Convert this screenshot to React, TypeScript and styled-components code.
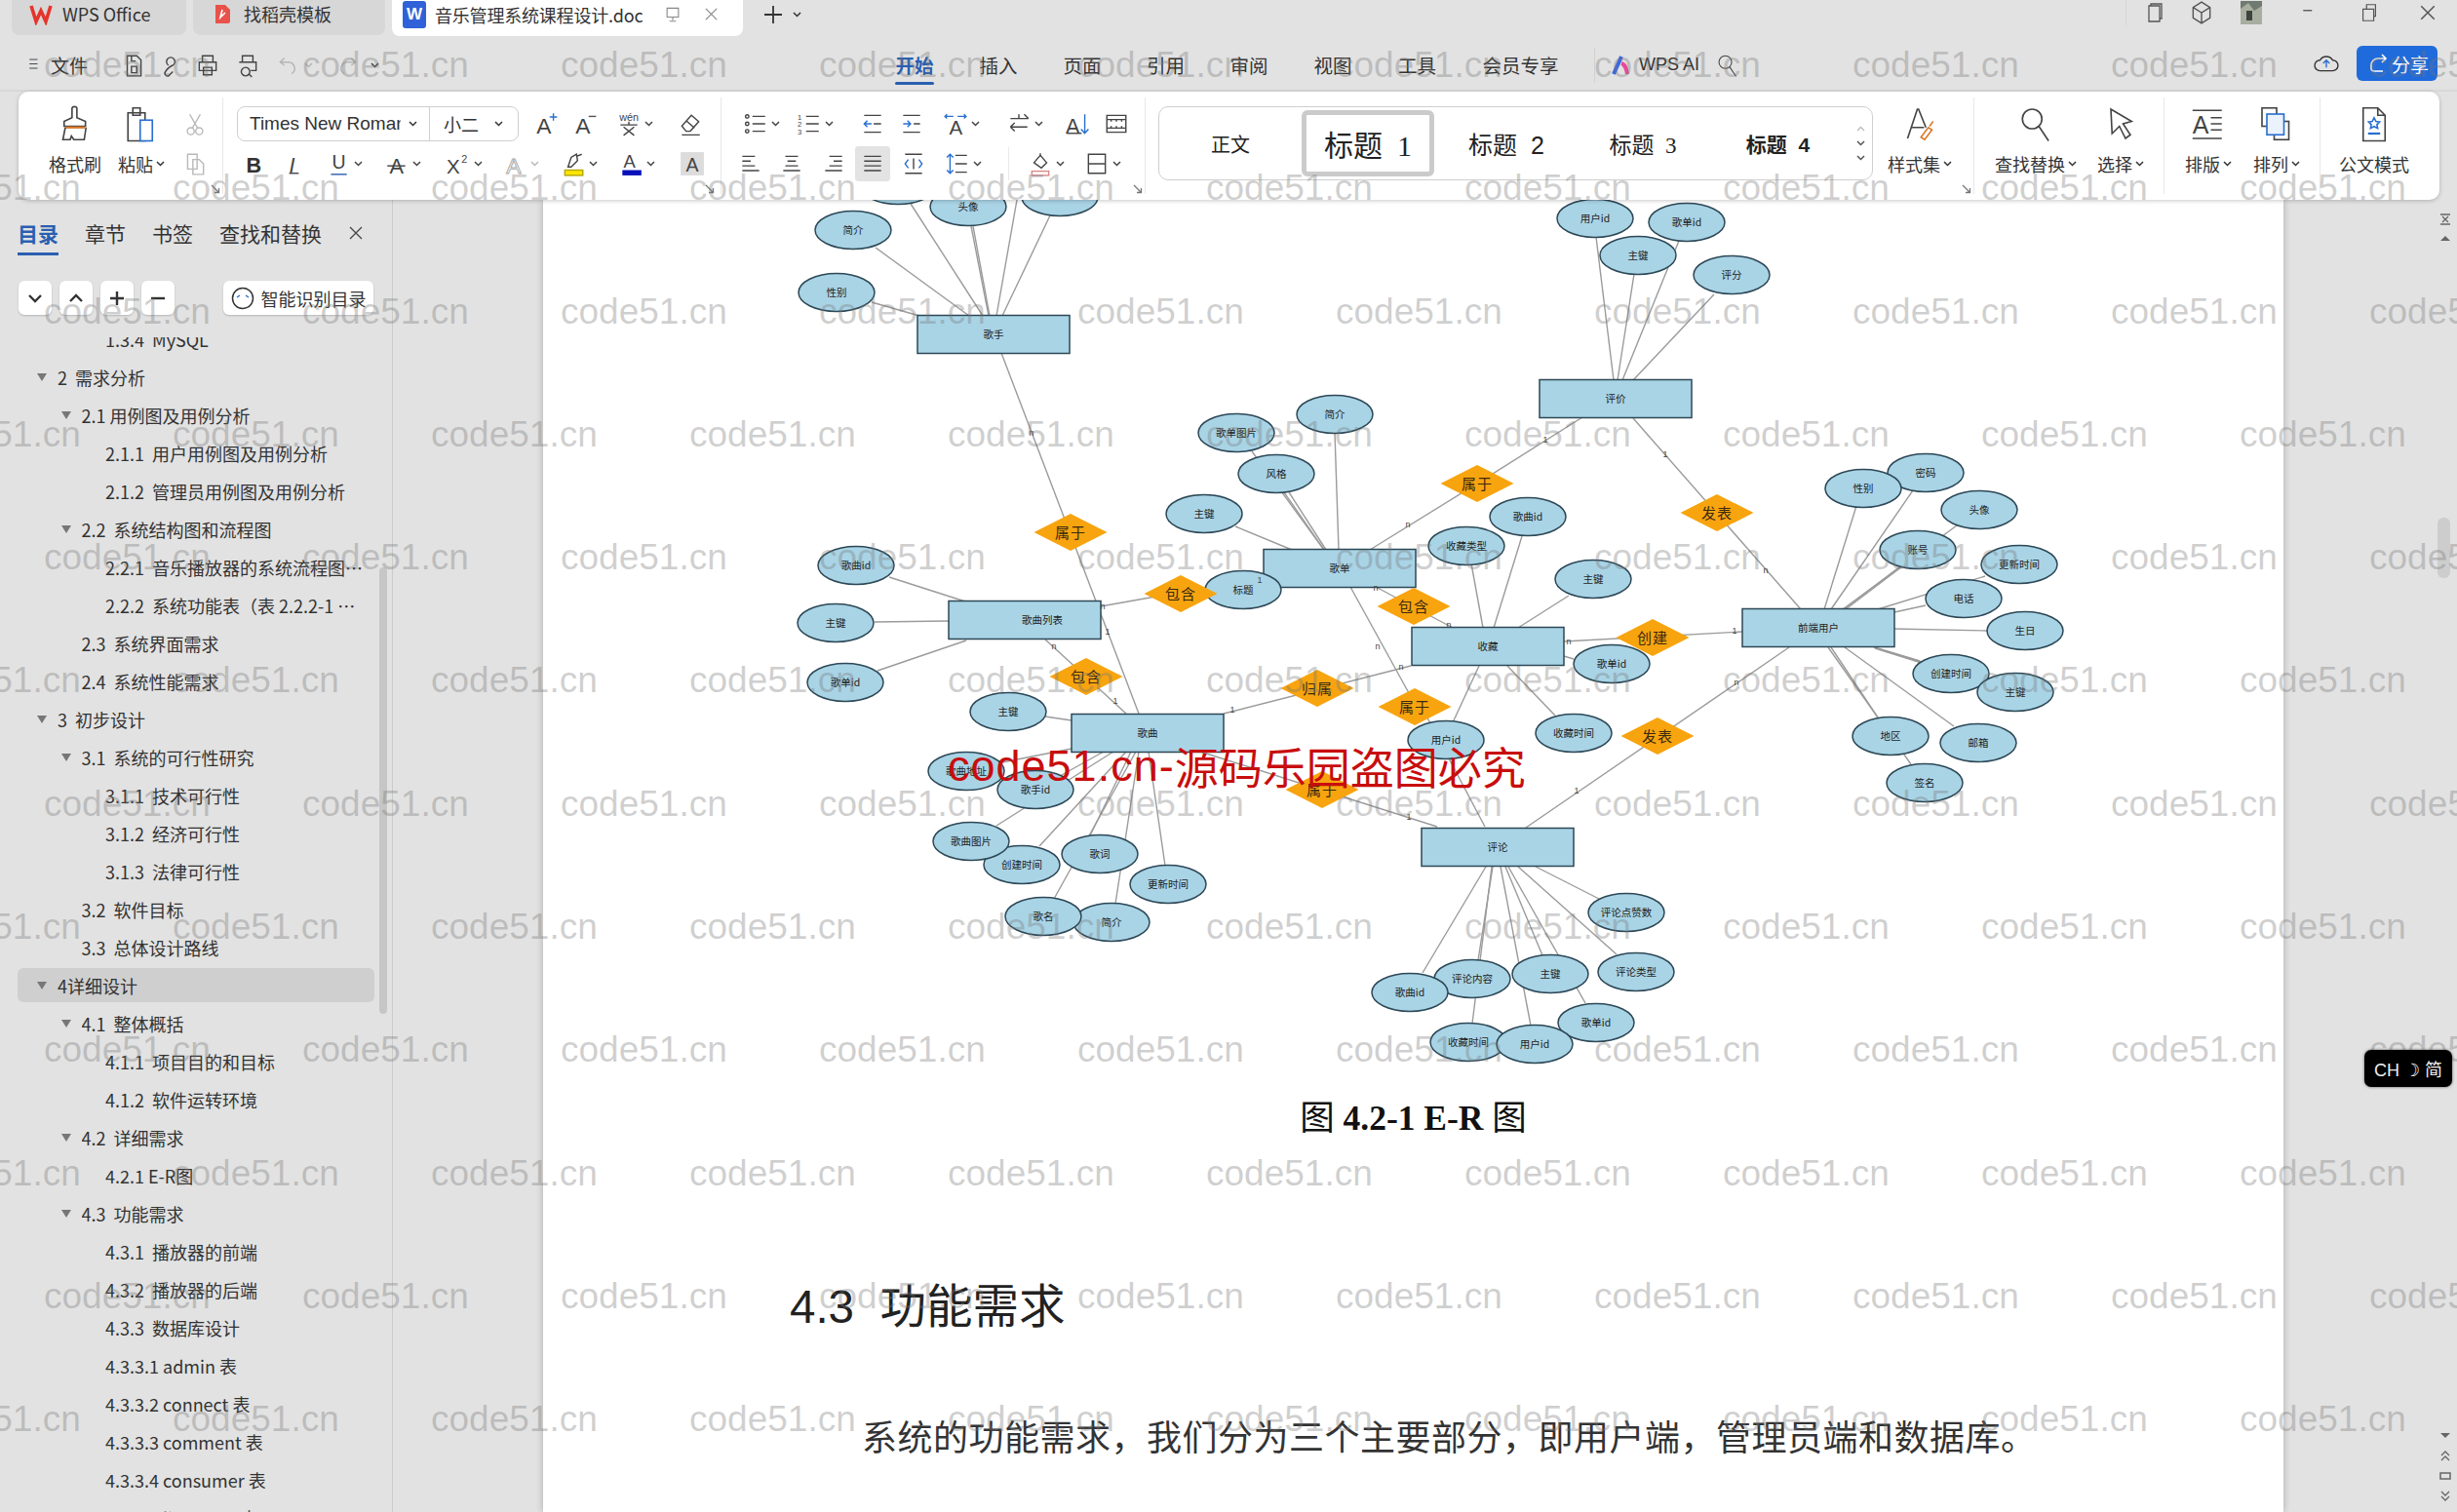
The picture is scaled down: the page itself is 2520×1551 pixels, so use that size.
import React from 'react';
import styled, { createGlobalStyle } from 'styled-components';

const CJK = `"Noto Sans CJK SC", sans-serif`;
const LATIN = `"Liberation Sans", "Noto Sans CJK SC", sans-serif`;

const Global = createGlobalStyle`
  html, body { margin: 0; padding: 0; background: #e2e2e2; }
  #root { width: 2520px; height: 1551px; overflow: hidden; }
  * { box-sizing: border-box; }
`;

const Root = styled.div`
  position: relative; width: 2520px; height: 1551px; overflow: hidden;
  display: flex; flex-direction: column; background: #e2e2e2;
  font-family: ${CJK}; color: #333;
`;

/* ---------- title bar ---------- */
const TabBar = styled.div`height: 37px; display: flex; padding-left: 12px; gap: 7px; align-items: flex-start;`;
const DocTab = styled.div<{ $w: number; $active?: boolean }>`
  width: ${p => p.$w}px; height: ${p => (p.$active ? 37 : 36)}px;
  background: ${p => (p.$active ? '#fff' : '#d7d7d7')};
  border-radius: 0 0 8px 8px; display: flex; align-items: center;
  padding: 0 0 8px ${p => (p.$active ? 11 : 18)}px; font-size: 18px; color: #333;
`;
const TabText = styled.span`margin-left: 10px; white-space: nowrap;`;
const DocName = styled.span`margin-left: 9px; white-space: nowrap; font-size: 18px; width: 218px; letter-spacing: -.2px;`;
const WordBadge = styled.span`
  width: 24px; height: 28px; background: #2f62d8; border-radius: 3px; color: #fff;
  font: 700 17px "Liberation Sans", sans-serif; display: flex; align-items: center; justify-content: center;
`;
const TabClose = styled.span<{ $ml: number }>`margin-left: ${p => p.$ml}px; display: flex; color: #888;`;
const NewTab = styled.div`margin-left: 14px; height: 29px; display: flex; align-items: center; gap: 10px; color: #333;`;
const WinControls = styled.div`margin-left: auto; height: 26px; display: flex; align-items: center; color: #555;`;
const WinCell = styled.span<{ $w: number; $line?: boolean }>`
  width: ${p => p.$w}px; height: 26px; display: flex; justify-content: center; align-items: center;
  ${p => (p.$line ? 'border-left: 1px solid #d6d6d6;' : '')}
`;

/* ---------- menu bar ---------- */
const MenuBar = styled.div`height: 57px; display: flex; align-items: flex-start; border-bottom: 2px solid #d8d8d8;`;
const QuickArea = styled.div`width: 895px; height: 50px; padding: 9px 0 0 28px; display: flex; align-items: center; color: #444;`;
const FileLabel = styled.span`font-size: 19px; margin: 0 34px 0 6px; white-space: nowrap; color: #333;`;
const QuickCell = styled.span<{ $w: number; $dim?: boolean }>`
  width: ${p => p.$w}px; display: flex; align-items: center; gap: 3px;
  color: ${p => (p.$dim ? '#b5b5b5' : '#444')};
`;
const MenuTabs = styled.div`display: flex;`;
const MenuTab = styled.div<{ $w: number; $active?: boolean }>`
  width: ${p => p.$w}px; height: 50px; padding-top: 9px; display: flex; align-items: center; justify-content: center;
  font-size: 19.5px; position: relative; white-space: nowrap;
  color: ${p => (p.$active ? '#2a5fb0' : '#333')};
  font-weight: ${p => (p.$active ? 700 : 400)};
`;
const ActiveBar = styled.span`position: absolute; left: 23px; width: 40px; bottom: 0; height: 3px; background: #2a5fb0; border-radius: 2px;`;
const MenuDivider = styled.span`width: 1px; height: 36px; background: #d0d0d0; margin: 12px 15px 0 13px;`;
const AiBlock = styled.div`height: 50px; padding-top: 9px; display: flex; align-items: center; font: 18px "Liberation Sans", sans-serif; color: #333; gap: 6px;`;
const SearchWrap = styled.span`margin-left: 10px; display: flex; color: #444;`;
const MenuRight = styled.div`margin-left: auto; padding: 6px 20px 0 0; height: 50px; display: flex; align-items: center; gap: 18px;`;
const ShareBtn = styled.div`
  width: 83px; height: 36px; background: #1f6bdc; color: #fff; border-radius: 6px;
  display: flex; align-items: center; justify-content: center; gap: 3px; font-size: 19px;
`;

/* ---------- ribbon ---------- */
const Ribbon = styled.div`
  height: 111px; margin: 0 18px 0 19px; background: #fff; border-radius: 10px; display: flex;
  box-shadow: 0 1px 4px rgba(0,0,0,.22); position: relative; z-index: 2; color: #444;
`;
const Group = styled.div<{ $w: number; $none?: boolean }>`
  width: ${p => p.$w}px; flex: none; margin: 6px 0; padding-top: 6px; position: relative;
  border-right: ${p => (p.$none ? 'none' : '1px solid #e8e8e8')};
`;
const Cols = styled.div<{ $pl?: number }>`display: flex; padding-left: ${p => p.$pl ?? 0}px;`;
const Launcher = styled.span<{ $r?: number }>`position: absolute; right: ${p => p.$r ?? 2}px; bottom: 0; display: flex; color: #777;`;
const Big = styled.div<{ $w: number }>`width: ${p => p.$w}px; flex: none; display: flex; flex-direction: column; align-items: center;`;
const BigIcon = styled.div`height: 41px; display: flex; align-items: center; justify-content: center;`;
const BigLabel = styled.div`height: 41px; display: flex; align-items: center; gap: 3px; font-size: 18px; color: #333; white-space: nowrap;`;
const Row = styled.div<{ $pl?: number }>`height: 41px; display: flex; align-items: center; padding-left: ${p => p.$pl ?? 0}px;`;
const Cell = styled.div<{ $w: number; $dim?: boolean }>`
  width: ${p => p.$w}px; flex: none; display: flex; align-items: center; gap: 3px;
  color: ${p => (p.$dim ? '#b9b9b9' : '#444')};
`;
const Hl = styled.span`display: flex; background: #e3e3e3; box-shadow: 0 0 0 5px #e3e3e3; border-radius: 1px;`;
const Sep = styled.span`width: 1px; height: 34px; background: #e8e8e8; margin-right: 19px; flex: none;`;
const FontSelect = styled.div`
  width: 289px; height: 36px; border: 1px solid #cfcfcf; border-radius: 8px; display: flex; align-items: center;
  margin-right: 15px; flex: none; font-size: 19px; color: #333;
`;
const FontName = styled.div`
  width: 197px; height: 100%; border-right: 1px solid #cfcfcf; padding-left: 12px; display: flex; align-items: center;
  gap: 8px; font-family: "Liberation Sans", sans-serif; font-size: 19px;
`;
const FontClip = styled.span`width: 155px; overflow: hidden; white-space: nowrap; flex: none;`;
const FontSize = styled.div`flex: 1; padding-left: 14px; display: flex; align-items: center; gap: 16px; font-size: 18px;`;
const StyleBox = styled.div`
  margin: 15px 0 0 13px; width: 733px; height: 76px; border: 1px solid #cfcfcf; border-radius: 10px;
  display: flex; align-items: center; flex: none;
`;
const StyleItem = styled.div<{ $w: number; $size: number; $sel?: boolean; $bold?: boolean; $serif?: boolean }>`
  width: ${p => p.$w}px; height: ${p => (p.$sel ? 68 : 60)}px; flex: none; display: flex; align-items: center; justify-content: center;
  white-space: pre; color: #222; font-size: ${p => p.$size}px; font-weight: ${p => (p.$bold ? 700 : 400)};
  font-family: ${p => (p.$serif ? `"Liberation Serif", "Noto Sans CJK SC", serif` : LATIN)};
  ${p => (p.$sel ? 'border: 5px solid #cbcbcb; border-radius: 6px;' : '')}
`;
const StyleArrows = styled.div`flex: 1; display: flex; flex-direction: column; align-items: center; gap: 9px; color: #555;`;

/* ---------- body ---------- */
const Body = styled.div`flex: 1; min-height: 0; display: flex;`;
const Sidebar = styled.aside`
  width: 403px; flex: none; border-right: 1px solid #cbcbcb; display: flex; flex-direction: column; position: relative;
`;
const SideTabs = styled.div`display: flex; gap: 27px; padding: 18px 0 0 18px; align-items: flex-start;`;
const SideTab = styled.div<{ $active?: boolean }>`
  height: 39px; line-height: 32px; font-size: 21px; white-space: nowrap; color: ${p => (p.$active ? '#2a5fb0' : '#333')};
  font-weight: ${p => (p.$active ? 700 : 400)};
  border-bottom: ${p => (p.$active ? '3px solid #2a5fb0' : 'none')};
`;
const SideClose = styled.span`height: 32px; display: flex; align-items: center; color: #444;`;
const TreeTools = styled.div`display: flex; gap: 8px; padding: 26px 0 0 19px;`;
const ToolBtn = styled.div`
  width: 34px; height: 35px; background: #fff; border-radius: 6px; box-shadow: 0 1px 2px rgba(0,0,0,.2);
  display: flex; align-items: center; justify-content: center; color: #333;
`;
const SmartBtn = styled.div`
  width: 154px; height: 35px; margin-left: 42px; background: #fff; border-radius: 6px; box-shadow: 0 1px 2px rgba(0,0,0,.2);
  display: flex; align-items: center; justify-content: center; gap: 7px; font-size: 18px; color: #333; white-space: nowrap;
`;
const Tree = styled.div`flex: 1; margin-top: 23px; overflow: hidden;`;
const TreeList = styled.div`margin-top: -16px;`;
const TreeRow = styled.div<{ $level: number; $sel?: boolean }>`
  height: 35px; margin: 0 18px 4px; width: 366px; border-radius: 6px; display: flex; align-items: center;
  padding: 0 10px 0 ${p => 20 + (p.$level - 1) * 24.5}px; font-size: 18px; color: #333;
  background: ${p => (p.$sel ? '#cfcfcf' : 'transparent')};
`;
const Arrow = styled.span<{ $hide?: boolean }>`
  width: 0; height: 0; flex: none; margin-right: 11px;
  border-left: 5px solid transparent; border-right: 5px solid transparent;
  border-top: 8px solid ${p => (p.$hide ? 'transparent' : '#777')};
`;
const TreeText = styled.span`white-space: pre; overflow: hidden; text-overflow: ellipsis; flex: 1; min-width: 0;`;
const SideScroll = styled.span`position: absolute; left: 389px; top: 377px; width: 8px; height: 458px; background: #c6c6c6; border-radius: 4px;`;

const Gap = styled.div`width: 154px; flex: none;`;
const Page = styled.main`
  width: 1785px; flex: none; background: #fff; overflow: hidden; box-shadow: 0 0 7px rgba(0,0,0,.25);
  display: flex; flex-direction: column;
`;
const Diagram = styled.svg`display: block; margin-left: 223px; flex: none; font-family: ${CJK};`;
const Caption = styled.div`
  margin-top: 27px; height: 40px; text-align: center; color: #111; white-space: pre;
  font: 700 35.5px/40px "Liberation Serif", "Noto Sans CJK SC", serif;
`;
const CapCjk = styled.span`font-weight: 400;`;
const Heading = styled.h2`
  margin: 144px 0 0 253px; font: 400 47.5px/60px "Liberation Sans", "Noto Sans CJK SC", sans-serif; color: #222; white-space: pre;
`;
const Para = styled.p`margin: 76px 0 0 327px; font: 400 36px/50px ${CJK}; letter-spacing: .5px; color: #333; white-space: nowrap;`;

const RightGutter = styled.div`
  flex: 1; display: flex; flex-direction: column; align-items: flex-end; padding: 14px 6px 0 0; color: #666;
`;
const ArrowStack = styled.div<{ $gap: number }>`width: 12px; display: flex; flex-direction: column; align-items: center; gap: ${p => p.$gap}px;`;
const DocThumb = styled.div`width: 13px; height: 62px; background: #cdcdcd; border-radius: 6px; margin: 284px 1px 0 0;`;
const BottomStack = styled(ArrowStack)`margin-top: auto; padding-bottom: 10px;`;
const Ime = styled.div`
  position: absolute; left: 2425px; top: 1077px; width: 90px; height: 38px; background: #000; border-radius: 7px; color: #eee;
  display: flex; align-items: center; justify-content: center; gap: 6px; font: 18px "Liberation Sans", "Noto Sans CJK SC", sans-serif;
  box-shadow: 0 0 3px rgba(0,0,0,.6); z-index: 6;
`;

/* ---------- overlays ---------- */
const Watermark = styled.div`
  position: absolute; inset: 47px 0 0 0; overflow: hidden; pointer-events: none; z-index: 5;
  font: 400 37px/40px "Liberation Sans", sans-serif; color: rgba(118,118,118,.34);
`;
const MarkRow = styled.div<{ $odd: boolean }>`
  height: 126.3px; display: flex; margin-left: ${p => (p.$odd ? -88 : -220)}px;
`;
const Mark = styled.span`width: 265px; flex: none;`;
const Stamp = styled.div`
  position: absolute; left: 972px; top: 756px; z-index: 7; color: #c80d0d; white-space: nowrap;
  font: 45px/60px ${CJK}; display: flex; align-items: center;
`;
const StampLatin = styled.span`font: 45px/60px "Liberation Sans", sans-serif; letter-spacing: 1px;`;

/* ---------- icons ---------- */
const Ic = styled.svg`display: block; flex: none; fill: none; stroke: currentColor; stroke-width: 1.3; font-family: "Liberation Sans", sans-serif;`;
const I = ({ s = 26, box = 24, children }: { s?: number; box?: number; children: React.ReactNode }) => (
  <Ic width={s} height={s} viewBox={`0 0 ${box} ${box}`}>{children}</Ic>
);
const Caret = () => (
  <Ic width={9} height={6} viewBox="0 0 9 6"><path d="M1 1l3.5 3.5L8 1" strokeWidth="1.5" /></Ic>
);
const Corner = () => (
  <Ic width={10} height={10} viewBox="0 0 10 10"><path d="M1 1l7 7M4 8.5h4.5V4" /></Ic>
);
const L = ({ d, s = 26, blue }: { d: string; s?: number; blue?: string }) => (
  <I s={s}><path d={d} />{blue && <path d={blue} stroke="#2a6fcf" />}</I>
);
const Letter = ({ x, y, size, fill = '#444', children, weight = 400 }: { x: number; y: number; size: number; fill?: string; children: React.ReactNode; weight?: number }) => (
  <text x={x} y={y} fontSize={size} fill={fill} fontWeight={weight} stroke="none">{children}</text>
);

const icons: Record<string, React.ReactNode> = {
  grow: <I><Letter x={3} y={21} size={21}>A</Letter><path d="M19 2v7M15.5 5.5h7" stroke="#2a6fcf" /></I>,
  shrink: <I><Letter x={3} y={21} size={21}>A</Letter><path d="M15.5 5h7" stroke="#555" /></I>,
  pinyin: <I><Letter x={3} y={9} size={10}>wén</Letter><path d="M12 10v3M4 13h16M7 15l10 8M17 15L7 23" /></I>,
  eraser: <L d="M8 19l-4-5 9-10 7 6-8 9zM8 9l8 7M4 22.5h17" />,
  bullets: <I><circle cx="4" cy="5" r="1.6" /><circle cx="4" cy="12" r="1.6" /><circle cx="4" cy="19" r="1.6" /><path d="M9 5h12M9 12h12M9 19h12" /></I>,
  numbers: <I><Letter x={1} y={8} size={7}>1</Letter><Letter x={1} y={15} size={7}>2</Letter><Letter x={1} y={22} size={7}>3</Letter><path d="M9 5h12M9 12h12M9 19h12" /></I>,
  outdent: <L d="M4 4h16M4 20h16M13 12h7" blue="M11 12H4M7 9l-3 3 3 3" />,
  indent: <L d="M4 4h16M4 20h16M14 12h6" blue="M4 12h7M8 9l3 3-3 3" />,
  dir: <I><Letter x={6} y={22} size={19}>A</Letter><path d="M2 5h8M4 3L2 5l2 2M22 5h-8M20 3l2 2-2 2" stroke="#2a6fcf" /></I>,
  swap: <L d="M4 7h17M17 3l4 4M20 15H4M8 11l-4 4M4 15l4 4M12 3v4" />,
  sort: <I><Letter x={1} y={21} size={20}>A</Letter><path d="M2 21h14" /><path d="M19 3v18M15.5 17l3.5 4 3.5-4" stroke="#2a6fcf" /></I>,
  columns: <L d="M3 4h18v16H3zM3 8h18M3 16h18M7 8v2M12 8v2M17 8v2M7 14v2M12 14v2M17 14v2" />,
  bold: <I><Letter x={5} y={20} size={20} weight={700} fill="#333">B</Letter></I>,
  italic: <I><Letter x={7} y={20} size={20} fill="#444"><tspan fontStyle="italic">I</tspan></Letter><path d="M7 21h9" /></I>,
  underline: <I><Letter x={6} y={17} size={18}>U</Letter><path d="M5 22h15" stroke="#2a5fb0" /></I>,
  strike: <I><Letter x={5} y={21} size={20}>A</Letter><path d="M3 14h17" /></I>,
  sup: <I><Letter x={1} y={21} size={19}>X</Letter><Letter x={15} y={11} size={10}>2</Letter></I>,
  outline: <I><text x={4} y={21} fontSize={21} fill="#fff" stroke="#aaa" strokeWidth=".9">A</text></I>,
  marker: <I><path d="M7 15l3-9 5-3 1 6-6 6zM15 5l5-2" /><rect x="4" y="18" width="17" height="5" fill="#ffe600" stroke="#b5a500" /></I>,
  fontColor: <I><Letter x={5} y={16} size={17}>A</Letter><rect x="4" y="18" width="18" height="5" fill="#0a10b8" stroke="none" /></I>,
  shaded: <I><rect x="1" y="1" width="22" height="22" fill="#dcdcdc" stroke="none" /><Letter x={6} y={19} size={18}>A</Letter></I>,
  left: <L d="M4 5h12M4 9.5h8M4 14h12M4 18.5h16" />,
  center: <L d="M6 5h12M8 9.5h8M6 14h12M4 18.5h16" />,
  right: <L d="M8 5h12M12 9.5h8M8 14h12M4 18.5h16" />,
  justify: <L d="M4 5h16M4 9.5h16M4 14h16M4 18.5h16" />,
  dist: <L d="M4 3h16M4 21h16M12 7v10" blue="M7 8L4 12l3 4M17 8l3 4-3 4" />,
  spacing: <I><path d="M10 4h11M10 12h11M10 20h11" /><path d="M5 3v18M2 6l3-3 3 3M2 18l3 3 3-3" stroke="#2a6fcf" /></I>,
  bucket: <I><path d="M6 11l6-7 6 7-5 5zM12 4V2" /><rect x="4" y="19" width="16" height="4" stroke="#d88" /></I>,
  border: <L d="M4 3h16v18H4zM4 12h16" />,
};

const Brush = () => (
  <I s={40} box={32}>
    <path d="M13.5 3c.5-1.5 3.5-1.5 4 0v8l7 3v4H7v-4l6.5-3z" />
    <path d="M8 19h16" stroke="#d9792b" strokeWidth="1.8" />
    <path d="M8 19L6 29h6l1-3 2 3h8.5L25 19" />
  </I>
);
const Paste = () => (
  <I s={40} box={32}>
    <path d="M5 7h14v23H5z" /><path d="M9 3h6v6H9z" />
    <rect x="15" y="13" width="10" height="17" stroke="#2a6fcf" fill="#fff" />
  </I>
);
const StyleSet = () => (
  <I s={40} box={32}>
    <path d="M6 28L14 4h1l6 15M9.500 19h10" />
    <path d="M17 27l6-8 3 2-6 8zM24 18l3-4" stroke="#d9792b" />
  </I>
);
const Search = ({ s = 40 }: { s?: number }) => (
  <I s={s} box={32}><circle cx="13" cy="12" r="8" /><path d="M18.5 18l8 12" /></I>
);
const Pointer = () => <I s={40} box={32}><path d="M8 4l17 10-7 2 6 9-4 3-5-10-6 6z" /></I>;
const Typeset = () => (
  <I s={40} box={32}>
    <path d="M3 5h24M3 28h24M18 11h9M18 16h9M18 21h9" />
    <Letter x={3} y={24} size={20}>A</Letter>
  </I>
);
const Arrange = () => (
  <I s={40} box={32}>
    <rect x="4" y="3" width="12" height="15" /><rect x="14" y="14" width="12" height="15" />
    <rect x="8" y="8" width="14" height="17" fill="#eaf2fc" stroke="#2a6fcf" />
  </I>
);
const OfficeDoc = () => (
  <I s={40} box={32}>
    <path d="M7 3h12l6 6v21H7zM19 3v6h6" />
    <path d="M16 11l1.5 3 3 .5-2.2 2.2.6 3-2.9-1.5-2.9 1.5.6-3L11.5 14.500l3-.5z" stroke="#2a6fcf" />
    <path d="M11 24h10" stroke="#2a6fcf" strokeWidth="1.8" />
  </I>
);
const CloseX = ({ s = 16 }: { s?: number }) => (
  <Ic width={s} height={s} viewBox="0 0 16 16"><path d="M2 2l12 12M14 2L2 14" strokeWidth="1.3" /></Ic>
);

/* ---------- data ---------- */
type Tuple = [number, number, string];
const ovals: Tuple[] = [
  [921, 190, ''], [993, 212, '头像'], [1087, 202, ''], [875, 236, '简介'], [858, 300, '性别'],
  [1369, 425, '简介'], [1268, 444, '歌单图片'], [1309, 486, '风格'], [1235, 527, '主键'], [1275, 605, '标题'],
  [878, 580, '歌曲id'], [857, 639, '主键'], [867, 700, '歌单id'], [1034, 730, '主键'],
  [991, 791, '歌曲地址'], [1062, 810, '歌手id'], [1048, 887, '创建时间'], [996, 863, '歌曲图片'], [1128, 876, '歌词'],
  [1198, 907, '更新时间'], [1140, 946, '简介'], [1070, 940, '歌名'],
  [1636, 224, '用户id'], [1730, 228, '歌单id'], [1680, 262, '主键'], [1776, 282, '评分'],
  [1567, 530, '歌曲id'], [1504, 560, '收藏类型'], [1634, 594, '主键'], [1653, 681, '歌单id'], [1614, 752, '收藏时间'], [1483, 759, '用户id'],
  [1975, 485, '密码'], [1911, 501, '性别'], [2030, 523, '头像'], [1967, 564, '账号'], [2071, 579, '更新时间'], [2014, 614, '电话'],
  [2077, 647, '生日'], [2001, 691, '创建时间'], [2067, 710, '主键'], [1939, 755, '地区'], [2029, 762, '邮箱'], [1974, 803, '签名'],
  [1668, 936, '评论点赞数'], [1678, 997, '评论类型'], [1590, 999, '主键'], [1510, 1004, '评论内容'], [1446, 1018, '歌曲id'],
  [1637, 1049, '歌单id'], [1506, 1069, '收藏时间'], [1574, 1071, '用户id'],
];
const boxes: Tuple[] = [
  [1019, 343, '歌手'], [1374, 583, '歌单'], [1051, 636, '歌曲列表'], [1177, 752, '歌曲'], [1526, 663, '收藏'],
  [1657, 409, '评价'], [1865, 644, '前端用户'], [1536, 869, '评论'],
];
const gems: Tuple[] = [
  [1098, 546, '属于'], [1211, 609, '包含'], [1114, 694, '包含'], [1351, 706, '归属'], [1451, 725, '属于'], [1450, 622, '包含'],
  [1515, 496, '属于'], [1761, 526, '发表'], [1695, 654, '创建'], [1700, 755, '发表'], [1356, 810, '属于'],
];
const lines: number[][] = [
  [898, 254, 994, 324], [934, 209, 1008, 324], [996, 232, 1014, 324], [998, 232, 1015, 324], [1043, 205, 1022, 324], [1077, 221, 1028, 324], [894, 310, 943, 324],
  [1027, 362, 1168, 732], [912, 592, 990, 617], [897, 638, 973, 637], [900, 688, 991, 657], [1129, 622, 1297, 592],
  [1072, 656, 1155, 732], [1267, 540, 1325, 564], [1317, 505, 1358, 564], [1322, 505, 1360, 564], [1284, 463, 1358, 564], [1369, 444, 1373, 564],
  [1405, 564, 1515, 496], [1515, 496, 1623, 428], [1637, 243, 1655, 390], [1676, 281, 1659, 390], [1722, 247, 1664, 390], [1758, 302, 1675, 390],
  [1675, 429, 1847, 625], [1904, 519, 1871, 625], [1962, 503, 1878, 625], [2007, 539, 1890, 625], [1949, 581, 1891, 625], [1951, 581, 1893, 625],
  [2036, 591, 1926, 625], [1975, 621, 1943, 628], [2038, 647, 1942, 645], [1969, 678, 1922, 664], [1971, 680, 1923, 665],
  [2040, 700, 1922, 664], [1926, 736, 1878, 664], [2004, 745, 1892, 664], [1960, 784, 1875, 664],
  [1835, 664, 1565, 849], [1604, 658, 1787, 648], [1561, 550, 1532, 644], [1509, 578, 1521, 644], [1609, 611, 1557, 644], [1614, 676, 1604, 673],
  [1595, 734, 1546, 683], [1491, 739, 1517, 683], [1385, 602, 1445, 711], [1458, 725, 1523, 848], [1231, 771, 1474, 848],
  [1255, 732, 1447, 683], [1411, 602, 1490, 644], [1072, 735, 1099, 739], [1028, 782, 1099, 768], [1062, 810, 1132, 771],
  [1022, 847, 1142, 771], [1066, 868, 1155, 771], [1118, 857, 1160, 771], [1081, 922, 1165, 771], [1144, 927, 1168, 771], [1195, 888, 1178, 771],
  [1459, 998, 1524, 889], [1516, 985, 1531, 889], [1510, 1050, 1530, 889], [1570, 1052, 1539, 889], [1582, 980, 1544, 889], [1626, 1029, 1547, 889],
  [1658, 979, 1557, 889], [1640, 922, 1575, 889],
];
const cards: Tuple[] = [
  [1058, 447, 'n'], [1292, 598, '1'], [1131, 625, 'n'], [1136, 651, '1'], [1081, 666, 'n'], [1144, 722, '1'], [1444, 541, 'n'], [1585, 454, '1'],
  [1708, 469, '1'], [1811, 588, 'n'], [1781, 703, 'n'], [1617, 814, '1'], [1609, 661, 'n'], [1779, 650, '1'], [1413, 666, 'n'], [1445, 841, '1'],
  [1264, 731, '1'], [1437, 687, 'n'], [1411, 606, 'n'], [1486, 644, 'n'],
];

const rows: { l: number; t: string; a?: boolean; sel?: boolean }[] = [
  { l: 3, t: '1.3.4  MySQL' },
  { l: 1, t: '2  需求分析', a: true },
  { l: 2, t: '2.1 用例图及用例分析', a: true },
  { l: 3, t: '2.1.1  用户用例图及用例分析' },
  { l: 3, t: '2.1.2  管理员用例图及用例分析' },
  { l: 2, t: '2.2  系统结构图和流程图', a: true },
  { l: 3, t: '2.2.1  音乐播放器的系统流程图和功能图' },
  { l: 3, t: '2.2.2  系统功能表（表 2.2.2-1 系统功能表）' },
  { l: 2, t: '2.3  系统界面需求' },
  { l: 2, t: '2.4  系统性能需求' },
  { l: 1, t: '3  初步设计', a: true },
  { l: 2, t: '3.1  系统的可行性研究', a: true },
  { l: 3, t: '3.1.1  技术可行性' },
  { l: 3, t: '3.1.2  经济可行性' },
  { l: 3, t: '3.1.3  法律可行性' },
  { l: 2, t: '3.2  软件目标' },
  { l: 2, t: '3.3  总体设计路线' },
  { l: 1, t: '4详细设计', a: true, sel: true },
  { l: 2, t: '4.1  整体概括', a: true },
  { l: 3, t: '4.1.1  项目目的和目标' },
  { l: 3, t: '4.1.2  软件运转环境' },
  { l: 2, t: '4.2  详细需求', a: true },
  { l: 3, t: '4.2.1 E-R图' },
  { l: 2, t: '4.3  功能需求', a: true },
  { l: 3, t: '4.3.1  播放器的前端' },
  { l: 3, t: '4.3.2  播放器的后端' },
  { l: 3, t: '4.3.3  数据库设计' },
  { l: 3, t: '4.3.3.1 admin 表' },
  { l: 3, t: '4.3.3.2 connect 表' },
  { l: 3, t: '4.3.3.3 comment 表' },
  { l: 3, t: '4.3.3.4 consumer 表' },
  { l: 3, t: '4.3.3.5 list_song 表' },
];

type C = { i?: string; w: number; c?: boolean; dim?: boolean; hl?: boolean; sep?: boolean };
const g2r1: C[] = [{ i: 'grow', w: 40 }, { i: 'shrink', w: 45 }, { i: 'pinyin', w: 63, c: true }, { i: 'eraser', w: 30 }];
const g2r2: C[] = [
  { i: 'bold', w: 42 }, { i: 'italic', w: 45 }, { i: 'underline', w: 60, c: true }, { i: 'strike', w: 63, c: true },
  { i: 'sup', w: 58, c: true }, { i: 'outline', w: 60, c: true, dim: true }, { i: 'marker', w: 59, c: true },
  { i: 'fontColor', w: 63, c: true }, { i: 'shaded', w: 30 },
];
const g3r1: C[] = [
  { i: 'bullets', w: 55, c: true }, { i: 'numbers', w: 65, c: true }, { i: 'outdent', w: 40 }, { i: 'indent', w: 45 },
  { i: 'dir', w: 65, c: true }, { i: 'swap', w: 60, c: true }, { i: 'sort', w: 40 }, { i: 'columns', w: 30 },
];
const g3r2: C[] = [
  { i: 'left', w: 42 }, { i: 'center', w: 43 }, { i: 'right', w: 40 }, { i: 'justify', w: 42, hl: true }, { i: 'dist', w: 45 },
  { i: 'spacing', w: 65, c: true }, { w: 0, sep: true }, { i: 'bucket', w: 58, c: true }, { i: 'border', w: 50, c: true },
];

const Tools = ({ items }: { items: C[] }) => (
  <>
    {items.map((it, k) =>
      it.sep ? (
        <Sep key={k} />
      ) : (
        <Cell key={k} $w={it.w} $dim={it.dim}>
          {it.hl ? <Hl>{icons[it.i!]}</Hl> : icons[it.i!]}
          {it.c && <Caret />}
        </Cell>
      ),
    )}
  </>
);

const menu = [
  { t: '开始', w: 86, a: true }, { t: '插入', w: 86 }, { t: '页面', w: 86 }, { t: '引用', w: 85 }, { t: '审阅', w: 86 },
  { t: '视图', w: 86 }, { t: '工具', w: 87 }, { t: '会员专享', w: 125 },
];

const Diag = () => (
  <Diagram width={1400} height={895} viewBox="780 205 1400 895">
    {lines.map((l, k) => (
      <line key={k} x1={l[0]} y1={l[1]} x2={l[2]} y2={l[3]} stroke="#9b9b9b" strokeWidth="1.4" />
    ))}
    {boxes.map(([x, y, t], k) => (
      <g key={k}>
        <rect x={t === '歌曲列表' ? 973 : x - 78} y={y - 19.5} width={156} height={39} fill="#a9d4e6" stroke="#2d4856" strokeWidth="1.5" />
        <text x={t === '歌曲列表' ? 1069 : x} y={y + 4} fontSize="10.5" textAnchor="middle" fill="#222">{t}</text>
      </g>
    ))}
    {ovals.map(([x, y, t], k) => (
      <g key={k}>
        <ellipse cx={x} cy={y} rx={39} ry={19.5} fill="#a9d4e6" stroke="#2d4856" strokeWidth="1.5" />
        <text x={x} y={y + 4} fontSize="10.5" textAnchor="middle" fill="#222">{t}</text>
      </g>
    ))}
    {cards.map(([x, y, t], k) => (
      <text key={k} x={x} y={y} fontSize="9" textAnchor="middle" fill="#444" fontFamily="Liberation Sans">{t}</text>
    ))}
    {gems.map(([x, y, t], k) => (
      <g key={k}>
        <polygon points={`${x - 37.5},${y} ${x},${y - 19} ${x + 37.5},${y} ${x},${y + 19}`} fill="#f8a40f" />
        <text x={x} y={y + 5.5} fontSize="15" letterSpacing="1" textAnchor="middle" fill="#3a2a10">{t}</text>
      </g>
    ))}
  </Diagram>
);

export default function App() {
  return (
    <Root>
      <Global />
      <TabBar>
        <DocTab $w={179}>
          <I s={24}><path d="M2 4l5 16 5-11 5 11 5-16" stroke="#e5352b" strokeWidth="3.6" /></I>
          <TabText>WPS Office</TabText>
        </DocTab>
        <DocTab $w={197}>
          <I s={24}>
            <path d="M5 3h10l5 5v12a2 2 0 0 1-2 2H5z" fill="#e8524a" stroke="none" />
            <path d="M12 8l-2 8 5-5" stroke="#fff" strokeWidth="1.6" />
          </I>
          <TabText>找稻壳模板</TabText>
        </DocTab>
        <DocTab $w={360} $active>
          <WordBadge>W</WordBadge>
          <DocName>音乐管理系统课程设计.doc</DocName>
          <TabClose $ml={16}>
            <I s={20}><path d="M5 4h14v11H5zM12 15v4M8 20h8" /></I>
          </TabClose>
          <TabClose $ml={22}><CloseX s={15} /></TabClose>
        </DocTab>
        <NewTab>
          <Ic width={20} height={20} viewBox="0 0 20 20"><path d="M10 1v18M1 10h18" strokeWidth="1.8" /></Ic>
          <Caret />
        </NewTab>
        <WinControls>
          <WinCell $w={56} $line>
            <I s={24}><path d="M7 5h11v16H7zM9 5V3h11v15h-2" /></I>
          </WinCell>
          <WinCell $w={44}>
            <I s={26}><path d="M12 2l8 5v10l-8 5-8-5V7zM4 7l8 5 8-5M12 12v10" /></I>
          </WinCell>
          <WinCell $w={58}>
            <Ic width={22} height={24} viewBox="0 0 22 24">
              <rect width="22" height="24" fill="#6f7a70" stroke="none" />
              <path d="M0 8l8-6 6 8 8-5v19H0z" fill="#a8aea0" stroke="none" />
              <path d="M6 10h6v10H6z" fill="#3d443f" stroke="none" />
            </Ic>
          </WinCell>
          <WinCell $w={62}><I s={18}><path d="M3 9h12" strokeWidth="1.8" /></I></WinCell>
          <WinCell $w={60}><I s={22}><path d="M5 8h12v13H5zM9 8V3h10v13h-2" /></I></WinCell>
          <WinCell $w={60}><CloseX s={18} /></WinCell>
        </WinControls>
      </TabBar>

      <MenuBar>
        <QuickArea>
          <I s={18}><path d="M3 4h11M3 10h11M3 16h11" /></I>
          <FileLabel>文件</FileLabel>
          <QuickCell $w={37}><I s={26}><path d="M6 3h9l4 4v15H6zM10 13h5v6h-5zM10 3v5h4" /></I></QuickCell>
          <QuickCell $w={39}><I s={26}><path d="M11 12a4 4 0 1 1 4 0c-3 1-5 3-7 6a2.5 2.5 0 0 0 4 3l3-3" /></I></QuickCell>
          <QuickCell $w={41}><I s={26}><path d="M7 9V3h10v6M4 9h16v8H4zM8 14h8v7H8z" /></I></QuickCell>
          <QuickCell $w={42}><I s={26}><path d="M7 9V3h10v6M4 9h16v8h-5M10 14a4 4 0 1 0 .01 0M13 20l3 3" /></I></QuickCell>
          <QuickCell $w={60} $dim><I s={26}><path d="M8 5L4 9l4 3M4 9h8a6 6 0 0 1 3 11" /></I><Caret /></QuickCell>
          <QuickCell $w={37} $dim><I s={26}><path d="M16 5l4 4-4 3M20 9h-8a6 6 0 0 0-3 11" /></I></QuickCell>
          <Caret />
        </QuickArea>
        <MenuTabs>
          {menu.map(m => (
            <MenuTab key={m.t} $w={m.w} $active={m.a}>
              {m.t}
              {m.a && <ActiveBar />}
            </MenuTab>
          ))}
        </MenuTabs>
        <MenuDivider />
        <AiBlock>
          <I s={24}>
            <path d="M12 3L4 21" stroke="#3a66e6" strokeWidth="4" />
            <path d="M12 10c4 1 5 5 6 11" stroke="#e74a9a" strokeWidth="4" />
          </I>
          WPS AI
          <SearchWrap><Search s={26} /></SearchWrap>
        </AiBlock>
        <MenuRight>
          <I s={26}>
            <path d="M6 19a5 5 0 0 1 0-10 7 7 0 0 1 12 0 5 5 0 0 1 0 10z" />
            <path d="M12 16V9M9 12l3-3 3 3" stroke="#2a6fcf" />
          </I>
          <ShareBtn>
            <Ic width={24} height={24} viewBox="0 0 24 24"><path d="M17 3l4 4-4 4M21 7h-8a7 7 0 0 0-7 7v3a3 3 0 0 0 3 3h9" strokeWidth="1.6" /></Ic>
            分享
          </ShareBtn>
        </MenuRight>
      </MenuBar>

      <Ribbon>
        <Group $w={210}>
          <Cols $pl={23}>
            <Big $w={70}><BigIcon><Brush /></BigIcon><BigLabel>格式刷</BigLabel></Big>
            <Big $w={66}><BigIcon><Paste /></BigIcon><BigLabel>粘贴<Caret /></BigLabel></Big>
            <Big $w={44}>
              <BigIcon>
                <Cell $w={26} $dim><I s={26}><circle cx="8" cy="19" r="3.3" /><circle cx="16" cy="19" r="3.3" /><path d="M9.5 16L17 3M14.5 16L7 3" /></I></Cell>
              </BigIcon>
              <BigIcon>
                <Cell $w={26} $dim><I s={26}><path d="M5 3h9v14H5zM10 8h6l4 4v10H10z" /></I></Cell>
              </BigIcon>
            </Big>
          </Cols>
          <Launcher><Corner /></Launcher>
        </Group>
        <Group $w={511}>
          <Row $pl={14}>
            <FontSelect>
              <FontName><FontClip>Times New Roman</FontClip><Caret /></FontName>
              <FontSize>小二<Caret /></FontSize>
            </FontSelect>
            <Tools items={g2r1} />
          </Row>
          <Row $pl={18}><Tools items={g2r2} /></Row>
          <Launcher $r={6}><Corner /></Launcher>
        </Group>
        <Group $w={435}>
          <Row $pl={22}><Tools items={g3r1} /></Row>
          <Row $pl={17}><Tools items={g3r2} /></Row>
          <Launcher><Corner /></Launcher>
        </Group>
        <StyleBox>
          <StyleItem $w={146} $size={20}>正文</StyleItem>
          <StyleItem $w={136} $size={30} $sel $serif>{'标题  1'}</StyleItem>
          <StyleItem $w={148} $size={25}>{'标题  2'}</StyleItem>
          <StyleItem $w={132} $size={23} $serif>{'标题  3'}</StyleItem>
          <StyleItem $w={145} $size={21} $bold>{'标题  4'}</StyleItem>
          <StyleArrows>
            <Ic width={9} height={6} viewBox="0 0 9 6"><path d="M1 5l3.5-3.5L8 5" stroke="#bbb" /></Ic>
            <Caret />
            <Caret />
          </StyleArrows>
        </StyleBox>
        <Group $w={104}>
          <Cols>
            <Big $w={96}><BigIcon><StyleSet /></BigIcon><BigLabel>样式集<Caret /></BigLabel></Big>
          </Cols>
          <Launcher><Corner /></Launcher>
        </Group>
        <Group $w={195}>
          <Cols $pl={13}>
            <Big $w={100}><BigIcon><Search /></BigIcon><BigLabel>查找替换<Caret /></BigLabel></Big>
            <Big $w={74}><BigIcon><Pointer /></BigIcon><BigLabel>选择<Caret /></BigLabel></Big>
          </Cols>
        </Group>
        <Group $w={160}>
          <Cols $pl={10}>
            <Big $w={70}><BigIcon><Typeset /></BigIcon><BigLabel>排版<Caret /></BigLabel></Big>
            <Big $w={70}><BigIcon><Arrange /></BigIcon><BigLabel>排列<Caret /></BigLabel></Big>
          </Cols>
        </Group>
        <Group $w={110} $none>
          <Big $w={110}><BigIcon><OfficeDoc /></BigIcon><BigLabel>公文模式</BigLabel></Big>
        </Group>
      </Ribbon>

      <Body>
        <Sidebar>
          <SideTabs>
            <SideTab $active>目录</SideTab>
            <SideTab>章节</SideTab>
            <SideTab>书签</SideTab>
            <SideTab>查找和替换</SideTab>
            <SideClose><CloseX s={16} /></SideClose>
          </SideTabs>
          <TreeTools>
            <ToolBtn><Ic width={16} height={16} viewBox="0 0 16 16"><path d="M2 5l6 6 6-6" strokeWidth="2.4" /></Ic></ToolBtn>
            <ToolBtn><Ic width={16} height={16} viewBox="0 0 16 16"><path d="M2 11l6-6 6 6" strokeWidth="2.4" /></Ic></ToolBtn>
            <ToolBtn><Ic width={16} height={16} viewBox="0 0 16 16"><path d="M8 1v14M1 8h14" strokeWidth="2.4" /></Ic></ToolBtn>
            <ToolBtn><Ic width={16} height={16} viewBox="0 0 16 16"><path d="M1 8h14" strokeWidth="2.4" /></Ic></ToolBtn>
            <SmartBtn>
              <Ic width={24} height={24} viewBox="0 0 24 24">
                <circle cx="12" cy="12" r="10.5" strokeWidth="1.5" />
                <path d="M6 11l3-2M18 11l-3-2" stroke="#2a6fcf" strokeWidth="1.5" />
              </Ic>
              智能识别目录
            </SmartBtn>
          </TreeTools>
          <Tree>
            <TreeList>
              {rows.map(r => (
                <TreeRow key={r.t} $level={r.l} $sel={r.sel}>
                  <Arrow $hide={!r.a} />
                  <TreeText>{r.t}</TreeText>
                </TreeRow>
              ))}
            </TreeList>
          </Tree>
          <SideScroll />
        </Sidebar>
        <Gap />
        <Page>
          <Diag />
          <Caption><CapCjk>图</CapCjk>{' 4.2-1 E-R '}<CapCjk>图</CapCjk></Caption>
          <Heading>{'4.3  功能需求'}</Heading>
          <Para>系统的功能需求，我们分为三个主要部分，即用户端，管理员端和数据库。</Para>
        </Page>
        <RightGutter>
          <ArrowStack $gap={10}>
            <Ic width={12} height={12} viewBox="0 0 12 12"><path d="M1 1h10M1 11h10M3 9l3-3 3 3M3 3l3 3 3-3" /></Ic>
            <Ic width={10} height={6} viewBox="0 0 10 6"><path d="M0 6l5-5 5 5z" fill="currentColor" stroke="none" /></Ic>
          </ArrowStack>
          <DocThumb />
          <BottomStack $gap={11}>
            <Ic width={10} height={6} viewBox="0 0 10 6"><path d="M0 0l5 5 5-5z" fill="currentColor" stroke="none" /></Ic>
            <Ic width={12} height={12} viewBox="0 0 12 12"><path d="M2 6l4-4 4 4M2 11l4-4 4 4" /></Ic>
            <Ic width={12} height={8} viewBox="0 0 12 8"><rect x="1" y="1" width="10" height="6" strokeWidth="1.5" /></Ic>
            <Ic width={12} height={12} viewBox="0 0 12 12"><path d="M2 1l4 4 4-4M2 6l4 4 4-4" /></Ic>
          </BottomStack>
        </RightGutter>
      </Body>

      <Watermark>
        {Array.from({ length: 12 }, (_, r) => (
          <MarkRow key={r} $odd={r % 2 === 1}>
            {Array.from({ length: 11 }, (_, c) => (
              <Mark key={c}>code51.cn</Mark>
            ))}
          </MarkRow>
        ))}
      </Watermark>
      <Stamp><StampLatin>code51.cn-</StampLatin>源码乐园盗图必究</Stamp>
      <Ime>CH ☽ 简</Ime>
    </Root>
  );
}
